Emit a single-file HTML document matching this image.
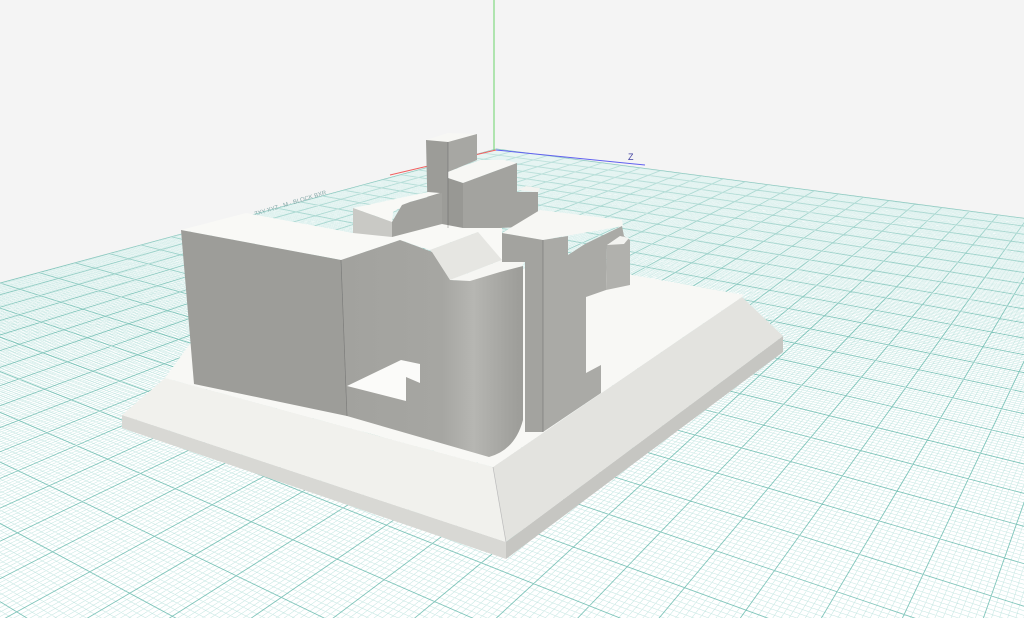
<!DOCTYPE html>
<html><head><meta charset="utf-8"><style>
html,body{margin:0;padding:0;width:1024px;height:618px;overflow:hidden;background:#f4f4f4;font-family:"Liberation Sans",sans-serif}
svg{position:absolute;left:0;top:0;overflow:hidden}
</style></head><body>
<svg id="g" width="1024" height="618" viewBox="0 0 1024 618">
<defs>
<linearGradient id="front" x1="341" y1="0" x2="525" y2="0" gradientUnits="userSpaceOnUse">
<stop offset="0" stop-color="#a2a29e"/><stop offset="0.55" stop-color="#a6a6a2"/><stop offset="0.72" stop-color="#b6b6b2"/><stop offset="0.9" stop-color="#a4a4a0"/><stop offset="1" stop-color="#9b9b97"/>
</linearGradient>
<linearGradient id="fog" x1="0" y1="150" x2="0" y2="330" gradientUnits="userSpaceOnUse">
<stop offset="0" stop-color="#ffffff" stop-opacity="0.55"/><stop offset="1" stop-color="#ffffff" stop-opacity="0"/>
</linearGradient>
</defs>
<polygon id="gridbg" fill="#ffffff" points=""/>
<g id="minor" stroke="#8ccfc5" stroke-width="0.6" stroke-opacity="0.45" fill="none"></g>
<g id="major" stroke="#4fae9f" stroke-width="0.9" stroke-opacity="0.7" fill="none"></g>
<polygon id="fogp" fill="url(#fog)" points=""/>
<line x1="494" y1="0" x2="494" y2="150" stroke="#6ad46a" stroke-width="1"/>
<line x1="496" y1="150" x2="645" y2="165" stroke="#6060f0" stroke-width="1"/>
<line x1="496" y1="150" x2="390" y2="175" stroke="#f06060" stroke-width="1"/>
<text x="628" y="160" font-size="9" fill="#4040a0">Z</text>
<text x="255" y="216" font-size="6" fill="#8aa" transform="rotate(-17 255 216)">ZXY XYZ · M · BLOCK BXR</text>
<!-- base -->
<polygon points="122,415 506,542 506,559 122,428" fill="#d8d8d4"/>
<polygon points="506,542 783,336 783,352 506,559" fill="#c6c6c2"/>
<polygon points="122,415 165,378 493,467 506,542" fill="#f1f1ed"/>
<polygon points="506,542 493,467 742,297 783,336" fill="#e3e3df"/>
<polygon points="165,378 493,467 742,297 744,295 560,262 200,330" fill="#f8f8f5"/>
<line x1="493" y1="467" x2="506" y2="542" stroke="#bbb" stroke-width="0.7"/>
<!-- tower -->
<polygon points="426,140 448,133 477,134 448,142" fill="#f7f7f4"/>
<polygon points="426,140 448,142 448,228 428,228" fill="#9c9c98"/>
<polygon points="448,142 477,134 477,160 448,172" fill="#a7a7a3"/>
<!-- block2 -->
<polygon points="448,172 480,160 505,160 517,163 463,183 448,178" fill="#f7f7f4"/>
<polygon points="448,178 463,183 463,230 448,230" fill="#989894"/>
<polygon points="463,183 517,163 517,192 538,192 538,226 463,230" fill="#a3a39f"/>
<polygon points="517,190 526,186 540,188 538,192" fill="#f3f3f0"/>
<!-- left low block -->
<polygon points="353,208 428,192 440,193 410,202 393,212 392,222" fill="#f9f9f6"/>
<polygon points="353,208 392,222 392,238 353,234" fill="#c9c9c5"/>
<polygon points="392,222 402,205 410,202 442,193 442,224 410,236 392,238" fill="#a2a29e"/>
<!-- tall block -->
<polygon points="181,230 246,213 353,233 392,237 442,224 463,228 502,228 502,262 478,232 430,250 400,240 341,260" fill="#f9f9f6"/>
<polygon points="181,230 341,260 347,416 194,384" fill="#9d9d99"/>
<polygon points="430,250 478,232 502,260 450,280" fill="#e6e6e2"/>
<polygon points="450,280 502,260 526,258 521,268 470,281" fill="#f6f6f3"/>
<path d="M341,260 L400,240 L419,247 L432,252 L450,280 L470,281 L500,272 L523,266 L523,420 Q515,450 489,457 L347,416 Z" fill="url(#front)"/>
<polygon points="347,386 401,360 420,364 420,383 406,377 406,401" fill="#fbfbf9"/>
<!-- right tower -->
<polygon points="502,233 540,210 622,220 623,226 543,240" fill="#f7f7f4"/>
<polygon points="502,233 543,240 543,432 525,432 525,262 502,262" fill="#a3a39f"/>
<polygon points="543,240 568,236 568,255 585,244 622,226 624,236 607,245 606,290 586,297 586,373 601,365 601,393 543,432" fill="#aaaaa6"/>
<polygon points="607,245 624,236 630,240 630,285 606,290" fill="#b1b1ad"/>
<polygon points="607,245 620,236 629,238 624,244" fill="#f3f3f0"/>
<g stroke="#555" stroke-width="0.6" fill="none" stroke-opacity="0.6">
<line x1="341" y1="260" x2="347" y2="416"/><line x1="543" y1="240" x2="543" y2="432"/><line x1="448" y1="142" x2="448" y2="228"/>
</g>
</svg>
<script>
(function(){
var O=[496,149],V1=[-1080,-58],V2=[1217,-46];
function P(t,s){var w=1+t+s;return [(t*V1[0]+s*V2[0]+O[0])/w,(t*V1[1]+s*V2[1]+O[1])/w];}
var a=-0.00105,b=-0.00194,ns="http://www.w3.org/2000/svg";
var mi=document.getElementById('minor'),ma=document.getElementById('major');
var W=0.04,N1=880,N2=490;
var dm="",dM="";
function seg(p,q){return "M"+p[0].toFixed(1)+","+p[1].toFixed(1)+"L"+q[0].toFixed(1)+","+q[1].toFixed(1);}
for(var i=0;i<=N1;i++){var t=a*i;var se=Math.max(b*N2,-(1-W)-t);if(se>=0)continue;var s=seg(P(t,0),P(t,se));if(i%10==0)dM+=s;else dm+=s;}
for(var j=0;j<=N2;j++){var s2=b*j;var te=Math.max(a*N1,-(1-W)-s2);if(te>=0)continue;var s=seg(P(0,s2),P(te,s2));if(j%10==0)dM+=s;else dm+=s;}
var p1=document.createElementNS(ns,'path');p1.setAttribute('d',dm);mi.appendChild(p1);
var p2=document.createElementNS(ns,'path');p2.setAttribute('d',dM);ma.appendChild(p2);
var pts=[P(0,0),P(a*N1,0),P(a*N1,-(1-W)-a*N1),P(-(1-W)-b*N2,b*N2),P(0,b*N2)];
var ps=pts.map(function(p){return p[0].toFixed(1)+","+p[1].toFixed(1)}).join(" ");
document.getElementById('gridbg').setAttribute('points',ps);
document.getElementById('fogp').setAttribute('points',ps);
})();
</script>
</body></html>
